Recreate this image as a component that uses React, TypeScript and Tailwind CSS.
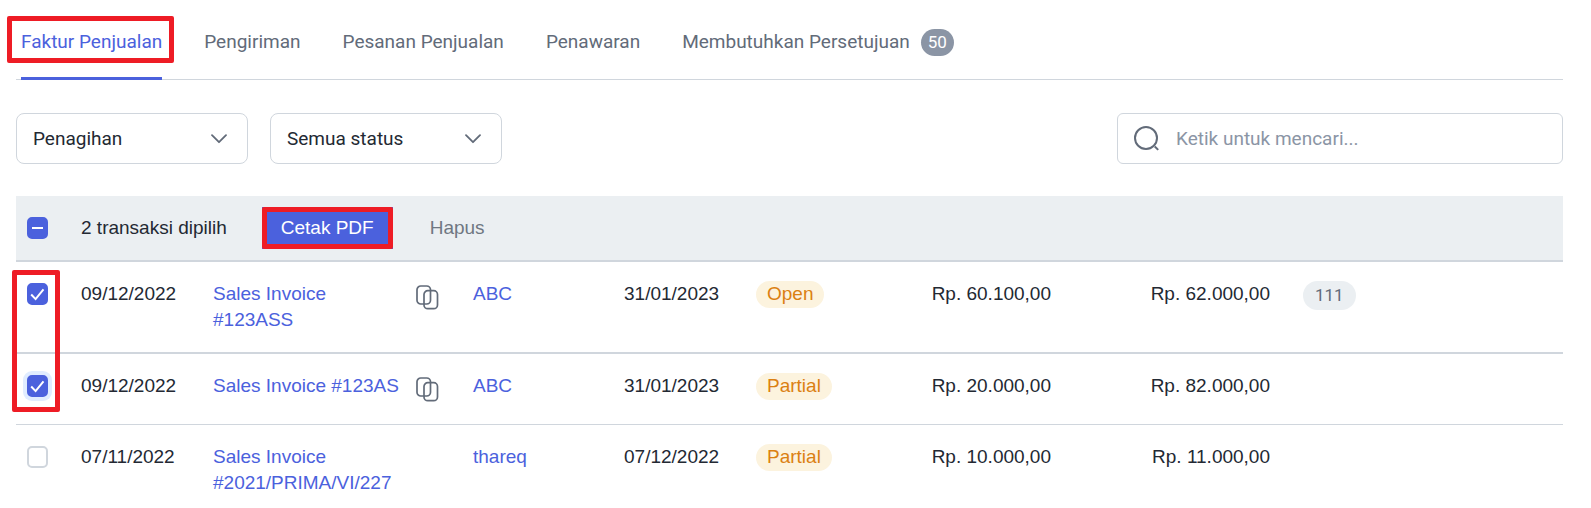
import { useState } from "react";

type Invoice = {
  id: number;
  date: string;
  name: string;
  canCopy: boolean;
  customer: string;
  dueDate: string;
  status: string;
  remaining: string;
  total: string;
  tag?: string;
};

const tabs = ["Pengiriman", "Pesanan Penjualan", "Penawaran"];

const invoices: Invoice[] = [
  {
    id: 1,
    date: "09/12/2022",
    name: "Sales Invoice #123ASS",
    canCopy: true,
    customer: "ABC",
    dueDate: "31/01/2023",
    status: "Open",
    remaining: "Rp. 60.100,00",
    total: "Rp. 62.000,00",
    tag: "111",
  },
  {
    id: 2,
    date: "09/12/2022",
    name: "Sales Invoice #123AS",
    canCopy: true,
    customer: "ABC",
    dueDate: "31/01/2023",
    status: "Partial",
    remaining: "Rp. 20.000,00",
    total: "Rp. 82.000,00",
  },
  {
    id: 3,
    date: "07/11/2022",
    name: "Sales Invoice #2021/PRIMA/VI/227",
    canCopy: false,
    customer: "thareq",
    dueDate: "07/12/2022",
    status: "Partial",
    remaining: "Rp. 10.000,00",
    total: "Rp. 11.000,00",
  },
];

function Highlight({ className }: { className: string }) {
  return (
    <span
      aria-hidden="true"
      className={`pointer-events-none absolute rounded-xs border-5 border-[#ee1c25] ${className}`}
    />
  );
}

function Checkbox({
  label,
  checked,
  partial,
  focused,
  onChange,
}: {
  label: string;
  checked: boolean;
  partial?: boolean;
  focused?: boolean;
  onChange: () => void;
}) {
  return (
    <label className="relative block h-[22px] w-[21px]">
      <input
        type="checkbox"
        aria-label={label}
        checked={checked}
        onChange={onChange}
        className={`block h-[22px] w-[21px] appearance-none rounded-[5px] border-2 border-[#d0d6dd] bg-white checked:border-[#4b61dd] checked:bg-[#4b61dd] ${
          focused ? "ring-4 ring-[#e0ecff]" : ""
        }`}
      />
      {checked && (
        <svg
          viewBox="0 0 21 22"
          fill="none"
          stroke="white"
          strokeWidth="2"
          className="pointer-events-none absolute inset-0"
        >
          <path d={partial ? "M5 11h11" : "M4.2 11.5l4.4 4.6L16.5 6.3"} />
        </svg>
      )}
    </label>
  );
}

function FilterSelect({ label, value }: { label: string; value: string }) {
  return (
    <div className="relative w-[232px]">
      <select
        aria-label={label}
        className="block h-[51px] w-full appearance-none rounded-lg border border-[#d0d6dd] bg-white px-4 text-[#232933]"
      >
        <option>{value}</option>
      </select>
      <svg
        viewBox="0 0 16 10"
        fill="none"
        stroke="#626b79"
        strokeWidth="1.8"
        strokeLinecap="round"
        strokeLinejoin="round"
        className="pointer-events-none absolute top-[21px] right-[21px] h-[10px] w-[16px]"
      >
        <path d="M1 1.2L8 8.2l7-7" />
      </svg>
    </div>
  );
}

function CopyIcon() {
  return (
    <svg
      viewBox="0 0 23 26"
      fill="none"
      stroke="#626b79"
      strokeWidth="1.7"
      className="h-[26px] w-[23px]"
    >
      <rect x="1" y="1" width="13.5" height="18" rx="3.8" />
      <rect x="8" y="5.7" width="13.5" height="18" rx="3.8" />
    </svg>
  );
}

function InvoiceRow({
  invoice,
  checked,
  focused,
  border,
  onToggle,
}: {
  invoice: Invoice;
  checked: boolean;
  focused: boolean;
  border: string;
  onToggle: () => void;
}) {
  const cell = `border-[#d0d6dd] px-4 pt-[19px] pb-[19px] align-top ${border}`;

  return (
    <tr>
      <td className={`border-[#d0d6dd] pt-[21px] pl-[11px] align-top ${border}`}>
        <Checkbox
          label={`Pilih ${invoice.name}`}
          checked={checked}
          focused={focused}
          onChange={onToggle}
        />
      </td>
      <td className={cell}>{invoice.date}</td>
      <td className={cell}>
        <div className="flex min-h-8 items-start">
          <a href="#" className="w-[190px] text-[#4b61dd]">
            {invoice.name}
          </a>
          {invoice.canCopy && (
            <button type="button" aria-label="Salin" className="mt-1 ml-[13px]">
              <CopyIcon />
            </button>
          )}
        </div>
      </td>
      <td className={cell}>
        <a href="#" className="text-[#4b61dd]">
          {invoice.customer}
        </a>
      </td>
      <td className={cell}>{invoice.dueDate}</td>
      <td className={cell}>
        <span className="inline-block rounded-full bg-[#fcf3de] px-[11px] pb-px text-[#db8012]">
          {invoice.status}
        </span>
      </td>
      <td className={`text-right ${cell}`}>{invoice.remaining}</td>
      <td className={`text-right ${cell}`}>{invoice.total}</td>
      <td className={cell}>
        {invoice.tag && (
          <span className="ml-px inline-block rounded-full bg-[#ebeff2] px-3 pt-px pb-0.5 font-[Roboto,sans-serif] text-[17px] leading-[26px] text-[#626b79]">
            {invoice.tag}
          </span>
        )}
      </td>
    </tr>
  );
}

export default function App() {
  const [selected, setSelected] = useState<number[]>([1, 2]);

  const toggle = (id: number) =>
    setSelected((prev) =>
      prev.includes(id) ? prev.filter((item) => item !== id) : [...prev, id],
    );

  const toggleAll = () =>
    setSelected(selected.length > 0 ? [] : invoices.map((item) => item.id));

  return (
    <main className="bg-white pr-7 pl-4 font-[Roboto,sans-serif] text-[19px] leading-[26px] text-[#232933]">
      <nav className="flex h-20 items-stretch gap-[42px] border-b border-[#d0d6dd] pl-[5px] text-[#626b79]">
        <a
          href="#"
          aria-current="page"
          className="relative -mb-px border-b-3 border-[#4b61dd] pt-[29px] text-[#4b61dd]"
        >
          Faktur Penjualan
          <Highlight className="top-4 -right-3 -left-[14px] h-[47px]" />
        </a>
        {tabs.map((tab) => (
          <a key={tab} href="#" className="pt-[29px]">
            {tab}
          </a>
        ))}
        <a href="#" className="flex items-start pt-[29px]">
          Membutuhkan Persetujuan
          <span className="ml-[11px] h-[27px] rounded-full bg-[#8b95a5] px-[7px] text-[17px] leading-[27px] text-white">
            50
          </span>
        </a>
      </nav>

      <div className="mt-[33px] flex items-center gap-[22px]">
        <FilterSelect label="Jenis transaksi" value="Penagihan" />
        <FilterSelect label="Status" value="Semua status" />
        <div className="relative ml-auto w-[446px]">
          <svg
            viewBox="0 0 26 26"
            fill="none"
            stroke="#626b79"
            strokeWidth="2"
            className="pointer-events-none absolute top-3 left-4 h-[26px] w-[26px]"
          >
            <circle cx="13" cy="13" r="11" />
            <path d="M21.8 21.5l3.4 3.4" />
          </svg>
          <input
            type="search"
            aria-label="Cari transaksi"
            placeholder="Ketik untuk mencari..."
            className="block h-[51px] w-full rounded-md border border-[#d0d6dd] pr-4 pl-[58px] placeholder:text-[#8b95a5]"
          />
        </div>
      </div>

      <div className="relative mt-8 font-['Liberation_Sans',Arial,sans-serif]">
        <table className="w-full table-fixed border-separate border-spacing-0">
          <colgroup>
            <col className="w-[49px]" />
            <col className="w-[132px]" />
            <col className="w-[260px]" />
            <col className="w-[151px]" />
            <col className="w-[132px]" />
            <col className="w-[160px]" />
            <col className="w-[167px]" />
            <col className="w-[219px]" />
            <col />
          </colgroup>
          <thead>
            <tr className="bg-[#ebeff2]">
              <td className="border-b-2 border-[#d0d6dd] pt-[21px] pl-[11px] align-top">
                <Checkbox
                  label="Pilih semua"
                  checked={selected.length > 0}
                  partial={selected.length < invoices.length}
                  onChange={toggleAll}
                />
              </td>
              <td colSpan={8} className="h-[66px] border-b-2 border-[#d0d6dd] px-4">
                <div className="flex items-center">
                  {selected.length} transaksi dipilih
                  <button
                    type="button"
                    className="relative ml-[35px] h-[42px] bg-[#4b61dd] px-[19px] pb-px text-white"
                  >
                    Cetak PDF
                    <Highlight className="inset-0" />
                  </button>
                  <button type="button" className="ml-[37px] text-[#6f7782]">
                    Hapus
                  </button>
                </div>
              </td>
            </tr>
          </thead>
          <tbody>
            {invoices.map((invoice, index) => (
              <InvoiceRow
                key={invoice.id}
                invoice={invoice}
                checked={selected.includes(invoice.id)}
                focused={invoice.id === 2}
                border={index === 0 ? "border-b-2" : index === 1 ? "border-b" : ""}
                onToggle={() => toggle(invoice.id)}
              />
            ))}
          </tbody>
        </table>
        <Highlight className="top-[74px] -left-1 h-[142px] w-12" />
      </div>
    </main>
  );
}
